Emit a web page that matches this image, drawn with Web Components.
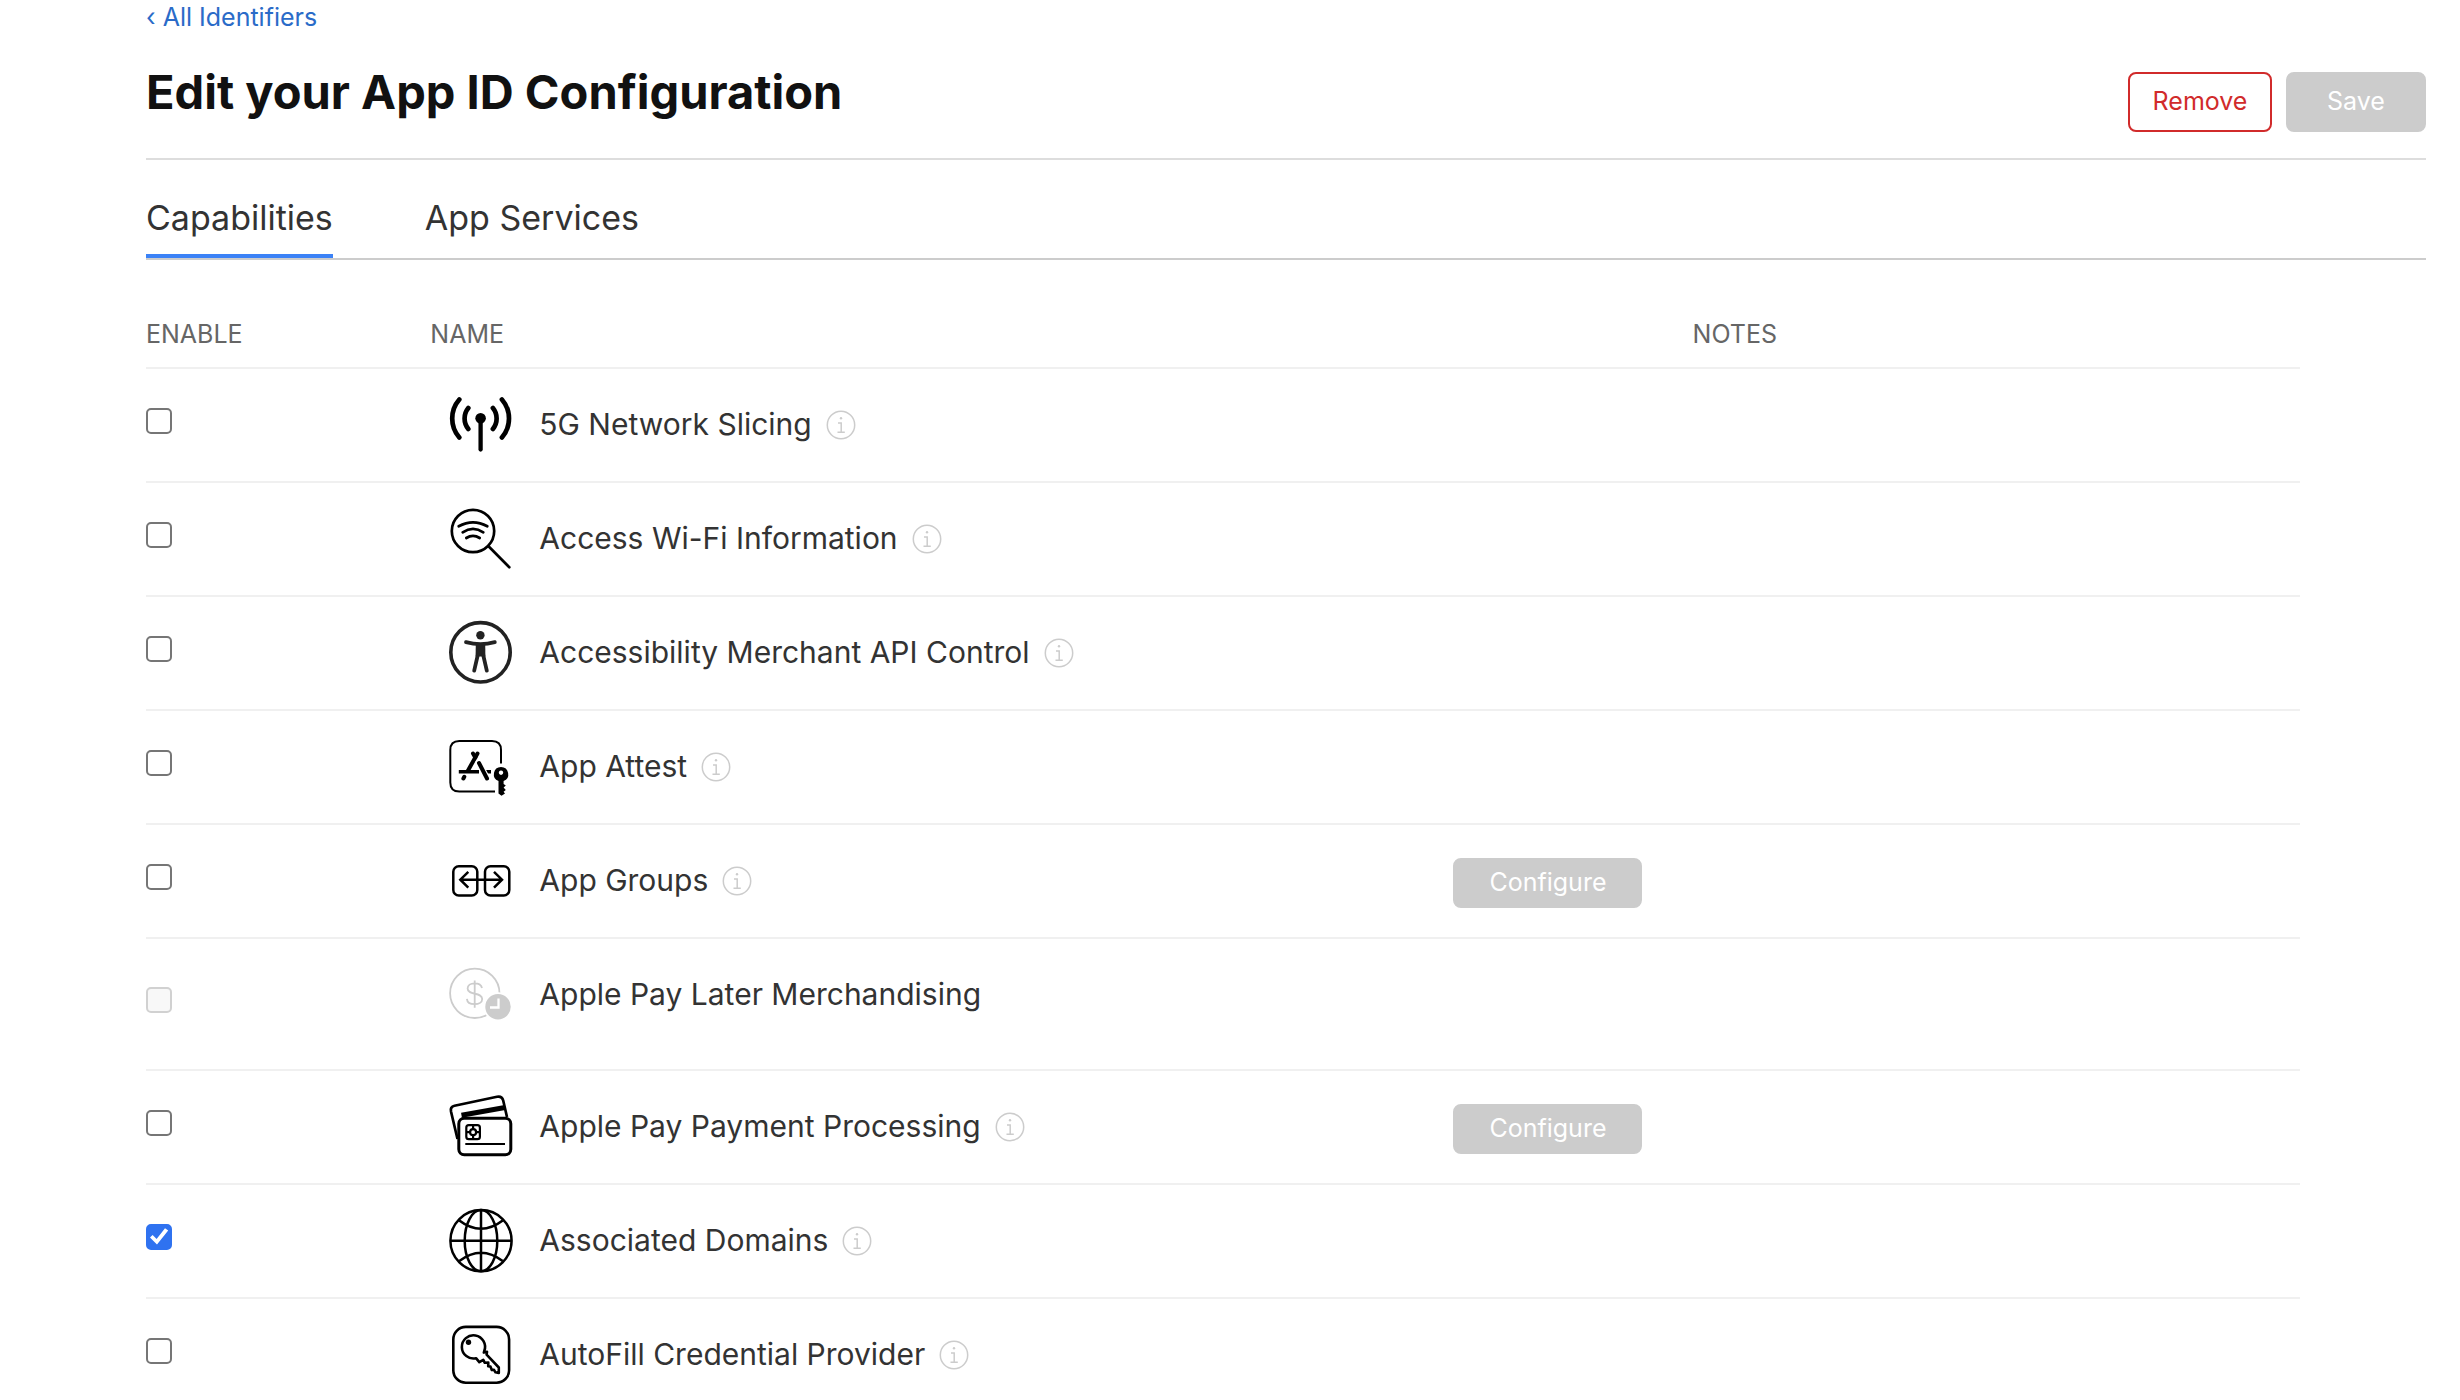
<!DOCTYPE html>
<html lang="en">
<head>
<meta charset="utf-8">
<title>Edit your App ID Configuration</title>
<style>
  body { margin: 0; background: #fff; font-family: Inter, "Liberation Sans", sans-serif; color: #333; }
</style>
</head>
<body>
<identifier-page>
  <back-link slot="back" href="#identifiers">All Identifiers</back-link>
  <page-header>
    Edit your App ID Configuration
    <action-button slot="actions" kind="danger">Remove</action-button>
    <action-button slot="actions" disabled>Save</action-button>
  </page-header>
  <tab-bar></tab-bar>
  <capability-table></capability-table>
</identifier-page>

<script>
const define = (name, html, setup) => {
  const template = document.createElement('template');
  template.innerHTML = html;
  customElements.define(name, class extends HTMLElement {
    constructor() {
      super();
      this.attachShadow({ mode: 'open' }).append(template.content.cloneNode(true));
    }
    connectedCallback() { if (setup) setup(this, this.shadowRoot); }
  });
};

define('identifier-page', `
  <style>
    :host { display: block; padding: 0 34px 0 146px; }
    main { display: flex; flex-direction: column; }
  </style>
  <slot name="back"></slot>
  <main><slot></slot></main>`);

define('back-link', `
  <style>
    :host { display: block; }
    a { display: block; width: fit-content; color: #2a6bc8; font-size: 25px; line-height: 34px; text-decoration: none; }
  </style>
  <a><span aria-hidden="true">‹ </span><slot></slot></a>`,
  (el, root) => { root.querySelector('a').href = el.getAttribute('href'); });

define('page-header', `
  <style>
    :host { display: flex; justify-content: space-between; align-items: center; height: 124px; border-bottom: 2px solid #ddd; }
    h1 { margin: 0 0 8px; font-size: 47px; line-height: 60px; font-weight: 700; color: #111; }
    div { display: flex; gap: 14px; padding-top: 12px; }
  </style>
  <h1><slot></slot></h1>
  <div><slot name="actions"></slot></div>`);

define('action-button', `
  <style>
    :host { display: inline-block; }
    button { box-sizing: border-box; display: block; height: 60px; min-width: 140px; padding: 0 22px 2px; border: 2px solid #ccc;
      border-radius: 8px; background: #ccc; color: #fff; font: 400 25px/30px Inter, "Liberation Sans", sans-serif; }
    :host([kind=danger]) button { min-width: 144px; background: #fff; border-color: #d12b2b; color: #d12b2b; }
    :host([size=small]) button { height: 50px; min-width: 189px; }
  </style>
  <button type="button"><slot></slot></button>`,
  (el, root) => { root.querySelector('button').disabled = el.hasAttribute('disabled'); });

define('tab-bar', `
  <style>
    :host { display: block; border-bottom: 2px solid #ccc; }
    nav { display: flex; gap: 92px; }
    a { height: 94px; border-bottom: 4px solid transparent; font-size: 34px; line-height: 116px; color: #333; text-decoration: none; }
    a[aria-current] { border-color: #3b82f6; }
  </style>
  <nav><a href="#capabilities" aria-current="page">Capabilities</a><a href="#services">App Services</a></nav>`);

const glyphs = {
  antenna: `<g fill="none" stroke="#000" stroke-width="4.7" stroke-linecap="round">
    <path d="M11.3 6.5A29 29 0 0 0 11.3 44.5M53.9 6.5A29 29 0 0 1 53.9 44.5M20.3 15A16.7 16.7 0 0 0 20.3 36M44.9 15A16.7 16.7 0 0 1 44.9 36"/>
    <path stroke-width="4.3" d="M32.6 26V56.5"/></g><circle cx="32.6" cy="25.3" r="5.3"/>`,
  wifi: `<g fill="none" stroke="#000" stroke-width="2.7" stroke-linecap="round"><circle cx="25" cy="24" r="21.2"/>
    <path d="M41 39.7L61.3 60.3"/><path d="M10.7 19.3Q25 11.3 39.3 19.3M14.7 25.3Q25 18.5 35.3 25.3M18.3 31Q25 26.6 31.7 31"/></g>`,
  accessibility: `<g fill="#222"><circle cx="32.5" cy="31.3" r="29.7" fill="none" stroke="#222" stroke-width="3.6"/>
    <circle cx="32.4" cy="14.2" r="4.2"/><path d="M27.8 22H37.2L37.4 35.5H27.6Z"/>
    <path fill="none" stroke="#222" stroke-width="3.8" stroke-linecap="round" d="M18 21.2Q32.4 25 46.8 21.2M29.8 34L26.2 49.6M35.2 34L38.8 49.6"/></g>`,
  attest: `<g fill="none" stroke="#000" stroke-width="4" stroke-linecap="round">
    <path stroke-width="2" stroke-linecap="butt" d="M53 28.5V15Q53 6 44 6H11.300Q2.300 6 2.300 15V47.500Q2.300 56.500 11.300 56.500H47"/>
    <path d="M29.500 18.500L20 35.500M16.300 41.800L15.400 43.500"/><path stroke-width="3.600" stroke-linecap="butt" d="M10.800 36.700H31M37 36.700H43"/>
    <path stroke="#fff" stroke-width="6" stroke-linecap="butt" d="M29.5 25.5L38.500 42"/><path d="M25 18.500L27.300 22.500M31 28L39 43.500"/></g>
    <circle cx="53" cy="39.300" r="9" fill="#fff"/>
    <path fill-rule="evenodd" d="M53 32a7.300 7.300 0 0 1 2.600 14.100V49L57.800 50.500L55.600 52.500L57.800 55L55.600 56.800L57 58.500L53.500 60.800L50.500 58.500V46.100A7.300 7.300 0 0 1 53 32ZM53 35.500a2.200 2.200 0 1 0 .01 0Z"/>`,
  groups: `<g fill="none" stroke="#000" stroke-width="2.5"><rect x="5.300" y="17.300" width="24" height="29.300" rx="5.500"/>
    <rect x="37" y="17.300" width="24.300" height="29.300" rx="5.500"/>
    <path d="M12 30.700H54M20.300 22.800L12.300 30.700L20.300 38.600M46 22.800L54 30.700L46 38.600"/></g>`,
  later: `<g fill="none" stroke="#ccc" stroke-width="1.8"><circle cx="26.800" cy="30.300" r="24.700"/>
    <path d="M26.700 17.500V44.800M34 25C33.300 21.800 30.500 20.400 26.700 20.400C22.500 20.400 19.600 22.500 19.600 25.600C19.600 33 34.200 28.500 34.200 36C34.200 39.200 31 41.200 26.700 41.200C22.200 41.200 19.200 39.200 18.900 35.800"/></g>
    <circle cx="50" cy="43.700" r="14.500" fill="#fff"/><circle cx="50" cy="43.700" r="12.700" fill="#ccc"/>
    <path fill="none" stroke="#fff" stroke-width="2.300" d="M50.500 35.500V44.500H42"/>`,
  cards: `<g fill="none" stroke="#000" stroke-width="2.700"><path d="M9.500 44L3 16.500Q2 11.800 6.500 10.800L49 1.700Q54 .7 55.200 5.500L59 22"/>
    <path stroke-width="5" d="M13.500 20.300L57 12.500"/><rect x="10.800" y="23.200" width="52" height="36.500" rx="5.500" fill="#fff" stroke-width="3"/>
    <g stroke-width="2.200"><rect x="18.300" y="30.200" width="13.600" height="14" rx="2.500"/><circle cx="25.100" cy="37.200" r="3"/>
    <path d="M25.100 30V34.200M25.100 40.200V44M18.500 37.200H22M28.100 37.200H32M17.300 49H57"/></g></g>`,
  globe: `<g fill="none" stroke="#000" stroke-width="2.500"><circle cx="33" cy="31.700" r="30.600"/><ellipse cx="33" cy="31.700" rx="16.300" ry="30.600"/>
    <path d="M33 1V62.300M2.300 31.700H63.600M11.300 11.500Q33 28 54.700 11.500M11.300 52Q33 35.500 54.700 52"/></g>`,
  key: `<g fill="none" stroke="#000" stroke-width="2.600" stroke-linejoin="round"><rect x="5.300" y="3.900" width="55.800" height="55.800" rx="12.500"/>
    <path d="M36.300 28L35.800 29.600L39 28.800L38.600 31.600L50.800 44.500V50L47.500 49.300L46 46.800L43.800 47L42.500 43.600L40.200 43.300L40.300 39.600L36.800 39.800L35.300 36.800L31.300 39.200L28 35.200A11.600 11.600 0 1 1 36.300 28Z"/></g>
    <circle cx="20.500" cy="19.300" r="2.700"/>`
};

define('capability-icon', `
  <style>:host { display: block; width: 64px; height: 64px; flex: none; } svg { display: block; overflow: visible; }</style>
  <svg width="64" height="64" viewBox="0 0 64 64" aria-hidden="true"></svg>`,
  (el, root) => { root.querySelector('svg').innerHTML = glyphs[el.getAttribute('name')]; });

define('info-button', `
  <style>
    :host { display: block; flex: none; }
    button { display: block; padding: 0; border: 0; background: none; }
    svg { display: block; }
  </style>
  <button type="button" aria-label="More information">
    <svg width="30" height="30" viewBox="0 0 30 30" fill="none" stroke="#ccc" stroke-width="1.500">
      <circle cx="15" cy="15" r="13.700"/><path d="M12 13H15.200V22.300M11.500 22.300H18.800"/><circle cx="15" cy="8.300" r="1.200" fill="#ccc" stroke="none"/>
    </svg>
  </button>`);

const capabilities = [
  { name: '5G Network Slicing', icon: 'antenna' },
  { name: 'Access Wi-Fi Information', icon: 'wifi' },
  { name: 'Accessibility Merchant API Control', icon: 'accessibility' },
  { name: 'App Attest', icon: 'attest' },
  { name: 'App Groups', icon: 'groups', configure: true },
  { name: 'Apple Pay Later Merchandising', icon: 'later', unavailable: true },
  { name: 'Apple Pay Payment Processing', icon: 'cards', configure: true },
  { name: 'Associated Domains', icon: 'globe', checked: true },
  { name: 'AutoFill Credential Provider', icon: 'key' }
];

define('capability-table', `
  <style>
    :host { display: block; padding: 47px 126px 0 0; }
    table { width: 100%; table-layout: fixed; border-collapse: separate; border-spacing: 0; }
    .enable { width: 13.2%; } .name { width: 47.5%; } .action { width: 11.1%; }
    th { box-sizing: border-box; height: 62px; padding: 0 0 6px; border-bottom: 2px solid #f0f0f0; text-align: left; font-size: 25px;
      line-height: 30px; font-weight: 400; color: #666; vertical-align: middle; }
    td { height: 112px; padding: 0; border-bottom: 2px solid #f0f0f0; vertical-align: middle; }
    .tall .cell { padding-bottom: 18px; }
    .cell { display: flex; align-items: center; height: 112px; padding-left: 18px; }
    label { margin: 0 14px 0 27px; padding-bottom: 2px; font-size: 30px; line-height: 40px; color: #333; white-space: nowrap; }
    input { appearance: none; box-sizing: border-box; display: grid; place-items: center; width: 26px; height: 26px; margin: 0 0 8px;
      border: 2px solid #767676; border-radius: 5px; background: #fff; }
    input:checked { border-color: #2f72f0; background: #2f72f0; }
    input:checked::before { content: ""; width: 20px; height: 20px; background: #fff;
      clip-path: polygon(5% 53%, 18% 40%, 38% 60%, 80% 6%, 96% 18%, 40% 88%); }
    input:disabled { border-color: #d1d1d1; background: #f8f8f8; }
    action-button { display: block; padding-top: 4px; }
  </style>
  <table>
    <thead><tr><th class="enable">ENABLE</th><th class="name">NAME</th><th class="action"></th><th>NOTES</th></tr></thead>
    <tbody></tbody>
  </table>`,
  (el, root) => {
    root.querySelector('tbody').innerHTML = capabilities.map((c, i) => `
      <tr class="${c.unavailable ? 'tall' : ''}">
        <td><input type="checkbox" id="cap${i}" ${c.checked ? 'checked' : ''} ${c.unavailable ? 'disabled' : ''}></td>
        <td><div class="cell"><capability-icon name="${c.icon}"></capability-icon><label for="cap${i}">${c.name}</label>${c.unavailable ? '' : '<info-button></info-button>'}</div></td>
        <td>${c.configure ? '<action-button size="small" disabled>Configure</action-button>' : ''}</td>
        <td></td>
      </tr>`).join('');
  });
</script>
</body>
</html>
